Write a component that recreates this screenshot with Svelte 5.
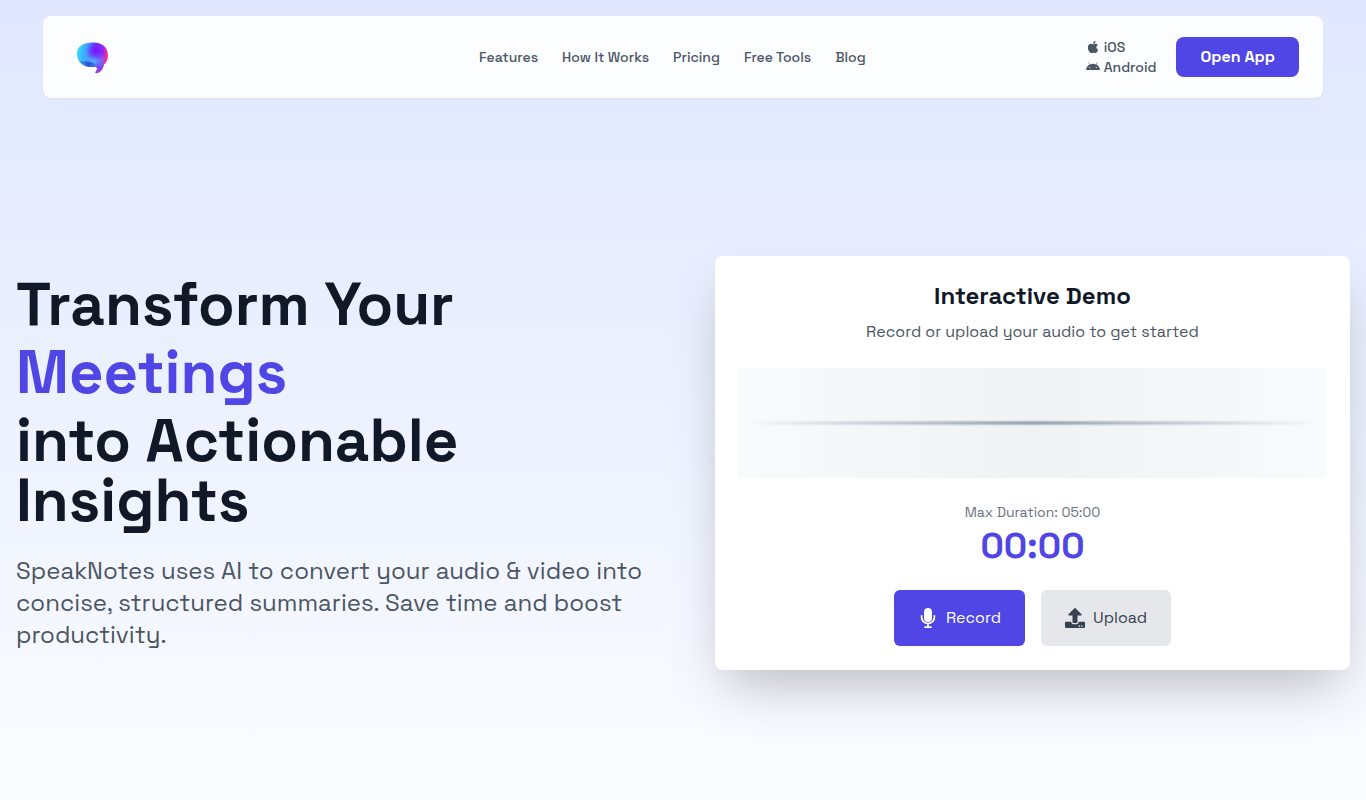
<script>
  const links = ['Features', 'How It Works', 'Pricing', 'Free Tools', 'Blog'];
  const bubble =
    'M2 13.500C2 6 9 2.500 17 2.500C26 2 32 6 33 14C33.500 19 31.500 23 29 24.500C28.500 29 25.500 32 22.500 33C20.500 33.600 20 32.500 21.200 31C22.300 29.500 22.500 28 21 26.800C12 28 2 25 2 13.500Z';
</script>

<div class="page">
  <header>
    <a class="brand" href="#home" aria-label="SpeakNotes home">
      <svg width="34" height="34" viewBox="0 0 34 34" aria-hidden="true">
        <defs>
          <linearGradient id="body" x1="0" y1="0.35" x2="1" y2="0.5">
            <stop offset="0" stop-color="#35dcf8" />
            <stop offset="0.3" stop-color="#3fa0fb" />
            <stop offset="0.55" stop-color="#6a35f8" />
            <stop offset="0.8" stop-color="#9a2cf0" />
            <stop offset="0.93" stop-color="#f02a9c" />
            <stop offset="1" stop-color="#ff5a78" />
          </linearGradient>
          <radialGradient id="violet" cx="0.6" cy="0.28" r="0.32">
            <stop offset="0" stop-color="#7a10ff" />
            <stop offset="1" stop-color="#7a10ff" stop-opacity="0" />
          </radialGradient>
          <radialGradient id="sky" cx="0.54" cy="0.6" r="0.4">
            <stop offset="0" stop-color="#4cb4ff" />
            <stop offset="1" stop-color="#4cb4ff" stop-opacity="0" />
          </radialGradient>
          <linearGradient id="shade" x1="0" y1="0" x2="1" y2="0">
            <stop offset="0" stop-color="#38a8f8" />
            <stop offset="0.5" stop-color="#2a50d8" />
            <stop offset="1" stop-color="#4a7cf8" />
          </linearGradient>
          <linearGradient id="tail" x1="0" y1="0" x2="0" y2="1">
            <stop offset="0" stop-color="#5a7cff" stop-opacity="0" />
            <stop offset="0.6" stop-color="#7a45ee" />
            <stop offset="1" stop-color="#c03ad0" />
          </linearGradient>
        </defs>
        <path d={bubble} fill="url(#body)" />
        <path d={bubble} fill="url(#sky)" />
        <path d={bubble} fill="url(#violet)" />
        <path d="M4 20.500C10 22 17 20.500 22 25.500L21 26.800C14 27.800 7 26 4 20.500Z" fill="url(#shade)" />
        <path d="M21 21L29 20C29 27 26 32 22.500 33C20.500 33.600 20 32.500 21.200 31C22.300 29.500 22.500 28 21 26.800Z" fill="url(#tail)" />
      </svg>
    </a>
    <nav aria-label="Main">
      {#each links as link}
        <a href="#{link.toLowerCase().replaceAll(' ', '-')}">{link}</a>
      {/each}
    </nav>
    <div class="actions">
      <div class="stores">
        <a href="#ios">
          <svg width="14" height="14" viewBox="0 0 384 512" aria-hidden="true"><path fill="currentColor" d="M318.700 268.700c-.2-36.700 16.400-64.400 50-84.800-18.800-26.900-47.200-41.700-84.700-44.600-35.500-2.800-74.300 20.700-88.500 20.700-15 0-49.400-19.700-76.400-19.700C63.300 141.200 4 184.800 4 273.500q0 39.300 14.400 81.200c12.800 36.700 59 126.700 107.200 125.200 25.200-.6 43-17.900 75.800-17.900 31.800 0 48.300 17.900 76.400 17.900 48.600-.7 90.400-82.500 102.600-119.300-65.200-30.700-61.700-90-61.700-91.900zm-56.600-164.200c27.300-32.400 24.800-61.900 24-72.500-24.100 1.400-52 16.400-67.900 34.900-17.500 19.800-27.800 44.300-25.600 71.900 26.100 2 49.900-11.400 69.500-34.300z" /></svg>
          iOS
        </a>
        <a href="#android">
          <svg width="14" height="14" viewBox="0 0 576 512" aria-hidden="true"><path fill="currentColor" d="M420.550 301.930a24 24 0 1 1 24-24 24 24 0 0 1-24 24m-265.100 0a24 24 0 1 1 24-24 24 24 0 0 1-24 24m273.700-144.480 47.940-83a10 10 0 1 0-17.270-10l-48.540 84.070a301.250 301.250 0 0 0-246.560 0L116.180 64.450a10 10 0 1 0-17.270 10l47.940 83C64.530 202.220 8.240 285.550 0 384h576c-8.240-98.450-64.540-181.780-146.850-226.550" /></svg>
          Android
        </a>
      </div>
      <a class="open" href="#app">Open App</a>
    </div>
  </header>

  <main>
    <section class="intro">
      <h1>Transform Your <span>Meetings</span> into Actionable Insights</h1>
      <p>SpeakNotes uses AI to convert your audio &amp; video into concise, structured summaries. Save time and boost productivity.</p>
    </section>

    <section class="card">
      <h2>Interactive Demo</h2>
      <p class="hint">Record or upload your audio to get started</p>
      <div class="wave"><div class="line"></div></div>
      <p class="limit">Max Duration: 05:00</p>
      <div class="timer">00:00</div>
      <div class="buttons">
        <button class="record" type="button">
          <svg width="20" height="20" viewBox="0 0 20 20" aria-hidden="true">
            <rect x="6" y="0" width="8" height="14" rx="4" fill="currentColor" />
            <path d="M3.600 8V9.200A6.400 6.400 0 0 0 16.400 9.200V8M10 15.800V19M7 19.100H13" fill="none" stroke="currentColor" stroke-width="1.800" stroke-linecap="round" />
          </svg>
          Record
        </button>
        <button class="upload" type="button">
          <svg width="20" height="20" viewBox="0 0 512 512" aria-hidden="true">
            <path fill="currentColor" d="M296 384h-80c-13.300 0-24-10.700-24-24V192h-87.700c-17.800 0-26.700-21.500-14.100-34.100L242.300 5.700c7.500-7.500 19.800-7.500 27.300 0l152.200 152.200c12.600 12.600 3.700 34.100-14.100 34.100H320v168c0 13.300-10.700 24-24 24zm216-8v112c0 13.300-10.700 24-24 24H24c-13.300 0-24-10.700-24-24V376c0-13.300 10.700-24 24-24h136v8c0 30.900 25.100 56 56 56h80c30.900 0 56-25.100 56-56v-8h136c13.300 0 24 10.700 24 24zm-124 88c0-11-9-20-20-20s-20 9-20 20 9 20 20 20 20-9 20-20zm64 0c0-11-9-20-20-20s-20 9-20 20 9 20 20 20 20-9 20-20z" />
          </svg>
          Upload
        </button>
      </div>
    </section>
  </main>
</div>

<style>
  :global(body) {
    margin: 0;
  }
  .page {
    box-sizing: border-box;
    min-height: 100vh;
    padding: 16px 16px 130px;
    background: linear-gradient(#e0e7ff, #fafcff);
    color: #111827;
    font-family: 'Space Grotesk', Inter, sans-serif;
    font-size: 16px;
    line-height: 24px;
  }
  h1,
  h2,
  p {
    margin: 0;
  }
  a {
    color: inherit;
    text-decoration: none;
  }
  header {
    box-sizing: border-box;
    display: flex;
    align-items: center;
    justify-content: space-between;
    max-width: 1280px;
    min-height: 82px;
    margin: 0 auto;
    padding: 0 24px;
    border-radius: 8px;
    background: #fcfdff;
    box-shadow: 0 1px 2px rgba(0, 0, 0, 0.05);
    color: #4b5563;
    font-size: 14px;
    font-weight: 500;
    line-height: 20px;
  }
  .brand {
    box-sizing: border-box;
    display: flex;
    width: 192px;
    padding-left: 8px;
  }
  nav {
    display: flex;
    gap: 24px;
  }
  .actions {
    display: flex;
    align-items: center;
    gap: 20px;
  }
  .stores a {
    display: flex;
    align-items: center;
    gap: 4px;
  }
  .open {
    padding: 8px 24px;
    border-radius: 8px;
    background: #4f46e5;
    color: #fff;
    font-size: 16px;
    font-weight: 700;
    line-height: 24px;
  }
  main {
    display: grid;
    grid-template-columns: 1fr 1fr;
    align-items: center;
    gap: 64px;
    padding-top: 158px;
  }
  h1 {
    margin-bottom: 24px;
    font-size: 60px;
    font-weight: 700;
    line-height: 60px;
  }
  h1 span {
    display: block;
    color: #4f46e5;
    line-height: 76px;
  }
  .intro p {
    color: #4b5563;
    font-size: 24px;
    line-height: 32px;
  }
  .card {
    padding: 24px;
    border-radius: 8px;
    background: #fff;
    box-shadow: 0 25px 50px -12px rgba(0, 0, 0, 0.25);
    text-align: center;
  }
  h2 {
    margin-bottom: 8px;
    font-size: 24px;
    font-weight: 700;
    line-height: 32px;
  }
  .hint {
    color: #4b5563;
  }
  .wave {
    display: flex;
    flex-direction: column;
    justify-content: center;
    height: 110px;
    margin: 24px 0;
    background: linear-gradient(90deg, #f9fafb, #f3f4f6 38%, #f1f2f4 50%, #f3f4f6 62%, #f9fafb);
  }
  .line {
    height: 2px;
    border: solid transparent;
    border-width: 2px 0;
    background: linear-gradient(90deg, transparent 1%, #9ca3af 50%, transparent 99%);
    mask-image: linear-gradient(transparent, #000 40%, #000 60%, transparent);
    mask-clip: border-box;
    mask-origin: border-box;
  }
  .limit {
    margin-bottom: 4px;
    color: #6b7280;
    font-size: 14px;
    line-height: 20px;
  }
  .timer {
    color: #4f46e5;
    font-size: 36px;
    font-weight: 700;
    line-height: 40px;
  }
  .buttons {
    display: flex;
    justify-content: center;
    gap: 16px;
    margin-top: 24px;
  }
  button {
    display: flex;
    align-items: center;
    gap: 8px;
    padding: 16px 24px;
    border: 0;
    border-radius: 6px;
    font: inherit;
  }
  .record {
    background: #4f46e5;
    color: #fff;
  }
  .upload {
    background: #e5e7eb;
    color: #374151;
  }
</style>
